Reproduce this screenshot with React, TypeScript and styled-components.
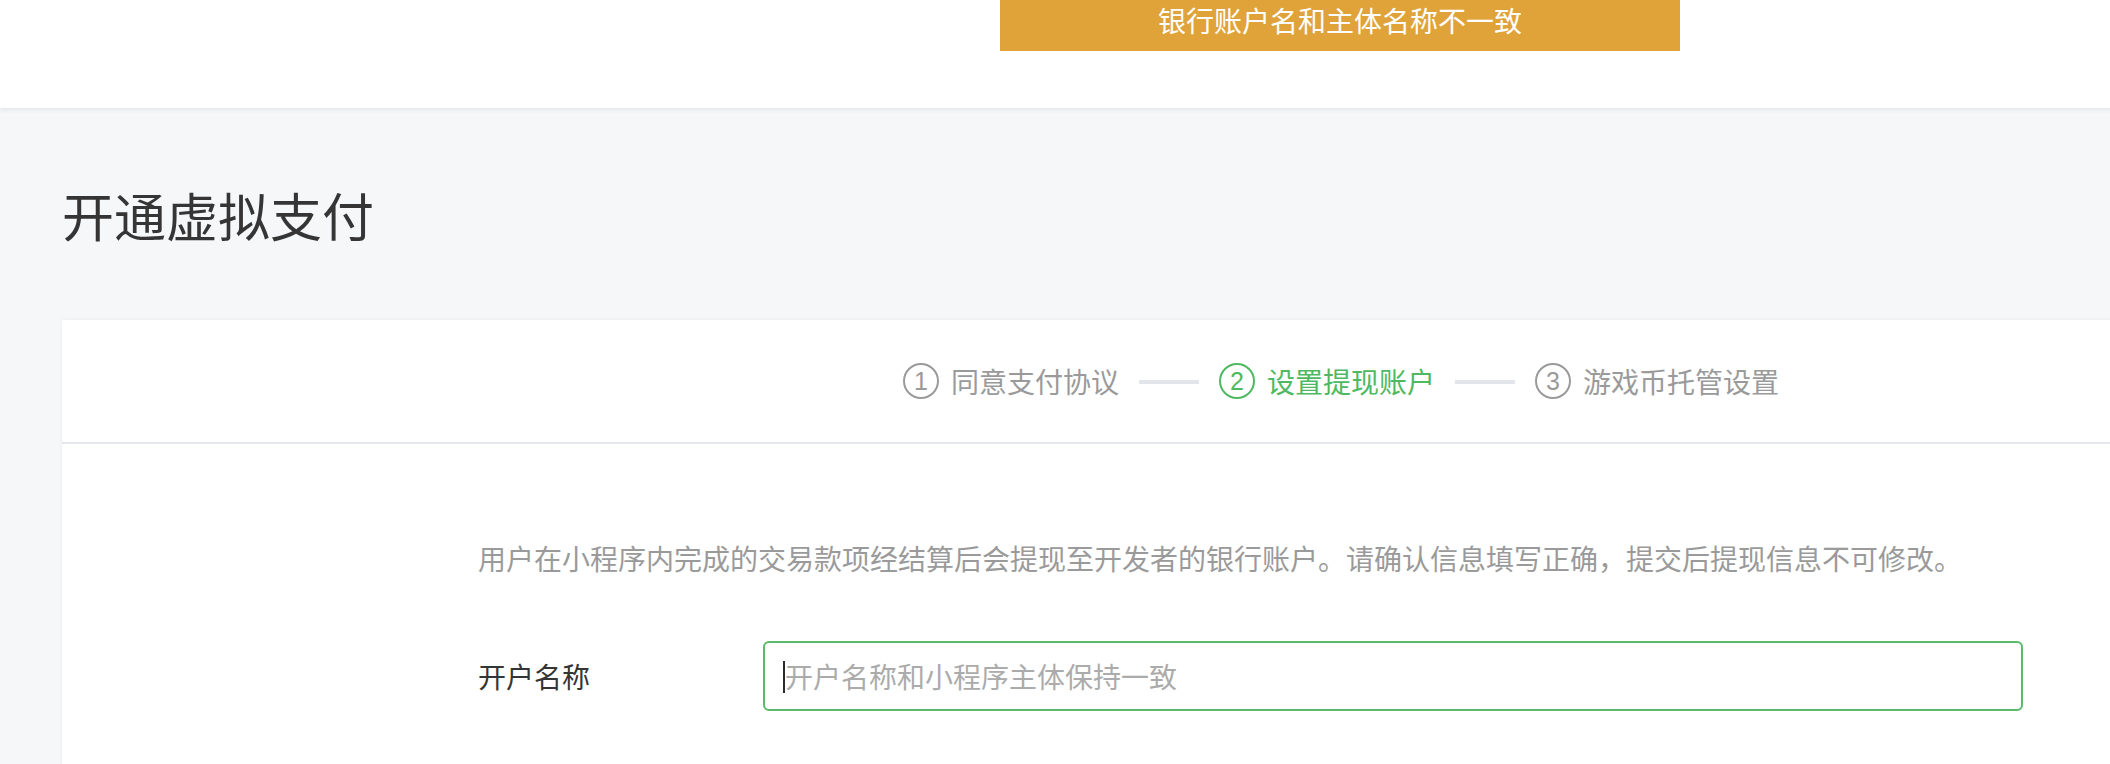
import React from 'react';
import styled, { createGlobalStyle } from 'styled-components';

const GlobalStyle = createGlobalStyle`
  html, body {
    margin: 0;
    padding: 0;
    overflow: hidden;
    background-color: #f6f7f9;
  }
  body {
    font-family: "Noto Sans CJK SC", "Noto Sans", "Liberation Sans", sans-serif;
    color: #353535;
  }
  * {
    box-sizing: border-box;
  }
`;

const Page = styled.div`
  width: 2680px;
  min-height: 764px;
`;

const Header = styled.header`
  height: 108px;
  background-color: #ffffff;
  box-shadow: 0 2px 5px rgba(0, 0, 0, 0.08);
  position: relative;
  z-index: 2;
`;

const Toast = styled.div`
  position: absolute;
  top: 0;
  left: 50%;
  transform: translateX(-50%);
  width: 680px;
  height: 51px;
  background-color: #e0a339;
  color: #ffffff;
  font-size: 28px;
  line-height: 40px;
  text-align: center;
`;

const Main = styled.main`
  padding: 0 62px;
`;

const Title = styled.h1`
  margin: 0;
  padding: 71px 0 69px;
  font-size: 52px;
  line-height: 72px;
  font-weight: 400;
  color: #353535;
`;

const Card = styled.section`
  background-color: #ffffff;
  box-shadow: 0 0 4px rgba(0, 0, 0, 0.05);
  min-height: 500px;
`;

const StepBar = styled.div`
  height: 124px;
  padding-left: 2px;
  border-bottom: 2px solid #e4e7eb;
  display: flex;
  align-items: center;
  justify-content: center;
`;

const Step = styled.div<{ $active?: boolean }>`
  display: flex;
  align-items: center;
  gap: 12px;
  color: ${p => (p.$active ? '#4fb961' : '#9a9a9a')};
  font-size: 28px;
  line-height: 40px;
`;

const StepNum = styled.span`
  width: 36px;
  height: 36px;
  border-radius: 50%;
  border: 2px solid currentColor;
  display: flex;
  align-items: center;
  justify-content: center;
  font-family: "Liberation Sans", "Noto Sans", sans-serif;
  font-size: 25px;
  line-height: 1;
`;

const Connector = styled.span`
  width: 60px;
  height: 4px;
  margin: 2px 20px 0;
  background-color: #e2e5e9;
`;

const Body = styled.div`
  padding: 94px 0 0 416px;
`;

const Notice = styled.p`
  margin: 0 0 63px;
  font-size: 28px;
  line-height: 40px;
  color: #9a9a9a;
`;

const FormRow = styled.div`
  display: flex;
  align-items: center;
`;

const Label = styled.label`
  width: 285px;
  font-size: 28px;
  line-height: 40px;
  color: #353535;
`;

const InputWrap = styled.div`
  position: relative;
  width: 1260px;
`;

const Input = styled.input`
  width: 100%;
  height: 70px;
  padding: 0 20px;
  border: 2px solid #5ab96a;
  border-radius: 6px;
  outline: none;
  font-family: inherit;
  font-size: 28px;
  color: #353535;
  caret-color: transparent;

  &::placeholder {
    color: #ababab;
  }
`;

const Caret = styled.span`
  position: absolute;
  left: 20px;
  top: 20px;
  width: 2px;
  height: 32px;
  background-color: #2b2b2b;
  pointer-events: none;
`;

const steps = ['同意支付协议', '设置提现账户', '游戏币托管设置'];

export default function App() {
  return (
    <Page>
      <GlobalStyle />
      <Header>
        <Toast>银行账户名和主体名称不一致</Toast>
      </Header>
      <Main>
        <Title>开通虚拟支付</Title>
        <Card>
          <StepBar>
            {steps.map((name, i) => (
              <React.Fragment key={name}>
                {i > 0 && <Connector />}
                <Step $active={i === 1}>
                  <StepNum>{i + 1}</StepNum>
                  {name}
                </Step>
              </React.Fragment>
            ))}
          </StepBar>
          <Body>
            <Notice>
              用户在小程序内完成的交易款项经结算后会提现至开发者的银行账户。请确认信息填写正确，提交后提现信息不可修改。
            </Notice>
            <FormRow>
              <Label htmlFor="account-name">开户名称</Label>
              <InputWrap>
                <Input id="account-name" placeholder="开户名称和小程序主体保持一致" />
                <Caret />
              </InputWrap>
            </FormRow>
          </Body>
        </Card>
      </Main>
    </Page>
  );
}
